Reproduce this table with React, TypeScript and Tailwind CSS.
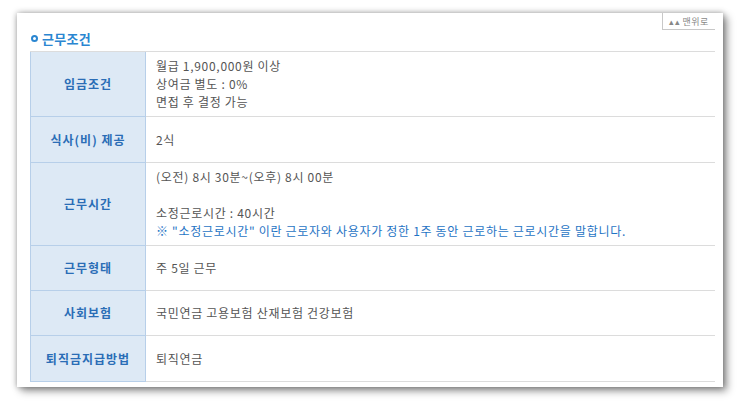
import React from "react";

const rows: { label: string; h: number; content: React.ReactNode }[] = [
  {
    label: "임금조건",
    h: 65,
    content: (
      <>
        <div>월급 1,900,000원 이상</div>
        <div>상여금 별도 : 0%</div>
        <div>면접 후 결정 가능</div>
      </>
    ),
  },
  { label: "식사(비) 제공", h: 46, content: <div>2식</div> },
  {
    label: "근무시간",
    h: 83,
    content: (
      <>
        <div>(오전) 8시 30분~(오후) 8시 00분</div>
        <div>&nbsp;</div>
        <div>소정근로시간 : 40시간</div>
        <div className="text-[#1f74c4]">※ "소정근로시간" 이란 근로자와 사용자가 정한 1주 동안 근로하는 근로시간을 말합니다.</div>
      </>
    ),
  },
  { label: "근무형태", h: 45, content: <div>주 5일 근무</div> },
  { label: "사회보험", h: 45, content: <div>국민연금 고용보험 산재보험 건강보험</div> },
  { label: "퇴직금지급방법", h: 46, content: <div>퇴직연금</div> },
];

export default function App() {
  return (
    <div
      className="w-[740px] h-[404px] bg-white overflow-hidden pt-[13px] pl-[17px]"
      style={{ fontFamily: '"Noto Sans CJK KR", "Noto Sans", sans-serif' }}
    >
      <div className="w-[706px] h-[374px] bg-white shadow-[0_0_6px_rgba(0,0,0,0.35),4px_4px_8px_rgba(0,0,0,0.4)] pl-[13px] pr-[8px] flex flex-col">
        <div className="flex justify-end h-[17px]">
          <div className="border-l border-b border-[#c8c8c8] w-[53px] h-[17px] flex items-center justify-center text-[9px] leading-none text-[#888] tracking-wider">
            ▴▴ 맨위로
          </div>
        </div>
        <div className="flex items-center gap-[4px] h-[17px] pl-[1px]">
          <span className="w-[7px] h-[7px] rounded-full border-[2px] border-[#2a86d1] inline-block" />
          <span className="text-[13px] font-bold text-[#2a86d1] leading-none tracking-[0.3px]">근무조건</span>
        </div>
        <div className="mt-[4px] border-t border-[#dcdcdc] flex flex-col">
          {rows.map((r, i) => (
            <div
              key={i}
              className="grid grid-cols-[116px_1fr] border-b border-[#dcdcdc]"
              style={{ height: r.h }}
            >
              <div className="bg-[#dde9f5] border-l border-r border-[#b7cfe9] flex items-center justify-center text-[12px] font-bold text-[#2a6db6] tracking-[1px] -mb-px border-b">
                {r.label}
              </div>
              <div className="flex flex-col justify-center pl-[10px] text-[12px] leading-[18px] text-[#555] tracking-[0.7px]">
                {r.content}
              </div>
            </div>
          ))}
        </div>
      </div>
    </div>
  );
}
